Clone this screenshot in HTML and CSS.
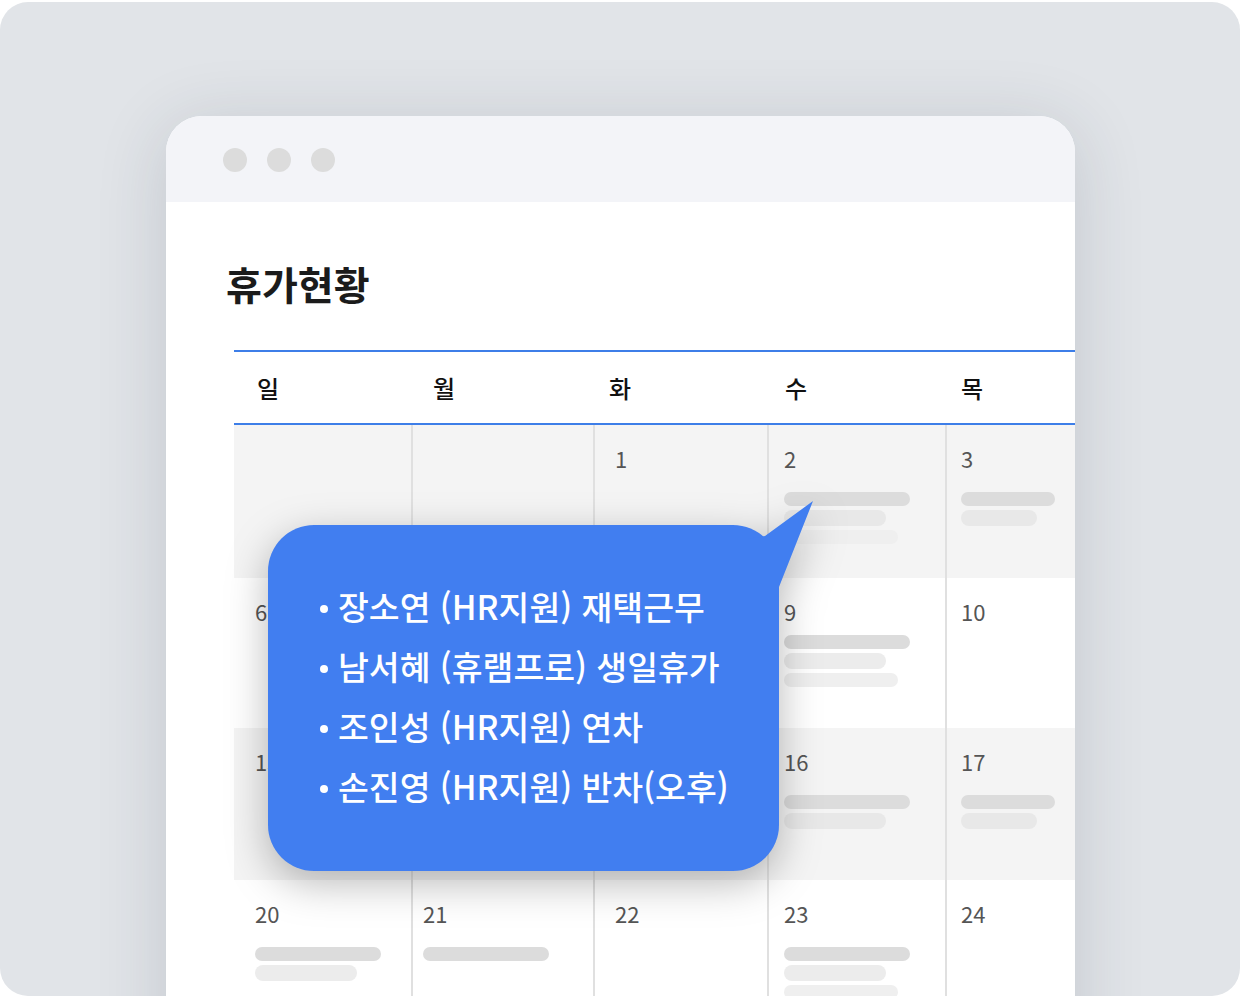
FILE: index.html
```html
<!DOCTYPE html>
<html lang="ko">
<head>
<meta charset="utf-8">
<title>휴가현황</title>
<link rel="stylesheet" href="styles.css">
</head>
<body>
<div class="frame">
  <div class="window">
    <div class="titlebar">
      <span class="dot"></span><span class="dot"></span><span class="dot"></span>
    </div>
    <div class="content">
      <h1 class="title">휴가현황</h1>
      <div class="calendar">
        <div class="head">
          <div>일</div><div>월</div><div>화</div><div>수</div><div>목</div>
        </div>
        <div class="week gray w1">
          <div class="cell"></div>
          <div class="cell"></div>
          <div class="cell"><div class="num">1</div></div>
          <div class="cell"><div class="num">2</div><div class="bar b1 wl"></div><div class="bar b2 wm"></div><div class="bar b3 wn"></div></div>
          <div class="cell"><div class="num">3</div><div class="bar b1 ws"></div><div class="bar b2 wt"></div></div>
        </div>
        <div class="week w2">
          <div class="cell"><div class="num">6</div></div>
          <div class="cell"><div class="num">7</div></div>
          <div class="cell"><div class="num">8</div></div>
          <div class="cell"><div class="num">9</div><div class="bar b1 wl"></div><div class="bar b2 wm"></div><div class="bar b3 wn"></div></div>
          <div class="cell"><div class="num">10</div></div>
        </div>
        <div class="week gray w3">
          <div class="cell"><div class="num">13</div></div>
          <div class="cell"><div class="num">14</div></div>
          <div class="cell"><div class="num">15</div></div>
          <div class="cell"><div class="num">16</div><div class="bar b1 wl"></div><div class="bar b2 wm"></div></div>
          <div class="cell"><div class="num">17</div><div class="bar b1 ws"></div><div class="bar b2 wt"></div></div>
        </div>
        <div class="week w4">
          <div class="cell"><div class="num">20</div><div class="bar b1 wl"></div><div class="bar b2 wm"></div></div>
          <div class="cell"><div class="num">21</div><div class="bar b1 wl"></div></div>
          <div class="cell"><div class="num">22</div></div>
          <div class="cell"><div class="num">23</div><div class="bar b1 wl"></div><div class="bar b2 wm"></div><div class="bar b3 wn"></div></div>
          <div class="cell"><div class="num">24</div></div>
        </div>
      </div>
    </div>
    <div class="bubble-wrap">
      <div class="bubble">
        <ul class="list">
          <li>장소연 (HR지원) 재택근무</li>
          <li>남서혜 (휴램프로) 생일휴가</li>
          <li>조인성 (HR지원) 연차</li>
          <li>손진영 (HR지원) 반차(오후)</li>
        </ul>
      </div>
      <svg class="tail" viewBox="0 0 70 100" width="70" height="100" aria-hidden="true">
        <polygon points="0,44 17,41 65,6 31,92 31,100 0,100" fill="#417ef0"/>
      </svg>
    </div>
  </div>
</div>
</body>
</html>
```

FILE: styles.css
```css
html, body {
  margin: 0;
  padding: 0;
  background: #ffffff;
}

body {
  font-family: "Noto Sans CJK KR", "Noto Sans", sans-serif;
}

.frame {
  margin-top: 2px;
  width: 1240px;
  height: 994px;
  box-sizing: border-box;
  padding: 114px 0 0 166px;
  background: #e1e4e8;
  border-radius: 28px;
  overflow: hidden;
}

.window {
  position: relative;
  width: 909px;
  height: 1000px;
  background: #ffffff;
  border-radius: 36px 36px 0 0;
  overflow: hidden;
  box-shadow: 0 10px 70px rgba(40, 50, 70, 0.16);
}

.titlebar {
  height: 86px;
  box-sizing: border-box;
  padding: 2px 0 0 57px;
  display: flex;
  align-items: center;
  gap: 20px;
  background: #f3f4f8;
}

.dot {
  width: 24px;
  height: 24px;
  border-radius: 50%;
  background: #dcdcdc;
}

.content {
  padding: 58px 0 0 60px;
}

.title {
  margin: 0 0 44px;
  font-size: 39px;
  line-height: 46px;
  font-weight: 700;
  color: #1b1b1b;
}

.calendar {
  margin-left: 8px;
  width: 889px;
}

.head {
  display: grid;
  grid-template-columns: repeat(5, 176px);
  border-top: 2px solid #3d7ee8;
  border-bottom: 2px solid #3d7ee8;
}

.head div {
  padding-left: 23px;
  font-size: 24px;
  line-height: 71px;
  font-weight: 500;
  color: #111111;
}

.week {
  display: grid;
  grid-template-columns: 177px 182px 174px 178px 178px;
  height: 150px;
}

.week.gray {
  background: #f4f4f4;
}

.w1 { height: 153px; }
.w2 { height: 150px; }
.w3 { height: 152px; }
.w4 { height: 200px; }

.cell {
  box-sizing: border-box;
  border-left: 2px solid #e0e0e0;
  padding-top: 21px;
}

.cell:nth-child(1) { border-left: 0; padding-left: 21px; }
.cell:nth-child(2) { padding-left: 10px; }
.cell:nth-child(3) { padding-left: 20px; }
.cell:nth-child(4) { padding-left: 15px; }
.cell:nth-child(5) { padding-left: 14px; }

.num {
  font-size: 22px;
  line-height: 24px;
  font-weight: 400;
  color: #555555;
}

.bar {
  height: 14px;
  margin-top: 4px;
  border-radius: 8px;
}

.b1 {
  margin-top: 22px;
  background: #dcdcdc;
}

.w2 .b1 {
  margin-top: 12px;
}

.b2 {
  height: 16px;
  background: #e8e8e8;
}

.w2 .b2, .w4 .b2 {
  background: #ececec;
}

.b3 {
  background: #efefef;
}

.wl { width: 126px; }
.wm { width: 102px; }
.wn { width: 114px; }
.ws { width: 94px; }
.wt { width: 76px; }

.bubble-wrap {
  position: absolute;
  left: 102px;
  top: 409px;
  filter: drop-shadow(0 12px 20px rgba(0, 0, 0, 0.28));
}

.bubble {
  width: 511px;
  height: 346px;
  box-sizing: border-box;
  padding: 51px 0 0 52px;
  background: #417ef0;
  border-radius: 46px;
}

.tail {
  position: absolute;
  left: 480px;
  top: -30px;
  display: block;
}

.list {
  margin: 0;
  padding: 0;
  list-style: none;
}

.list li {
  display: flex;
  align-items: center;
  font-size: 33.5px;
  line-height: 60px;
  font-weight: 500;
  color: #ffffff;
  white-space: nowrap;
}

.list li::before {
  content: "";
  flex: none;
  width: 8px;
  height: 8px;
  margin-right: 10px;
  border-radius: 50%;
  background: #ffffff;
  transform: translateY(3px);
}
```
